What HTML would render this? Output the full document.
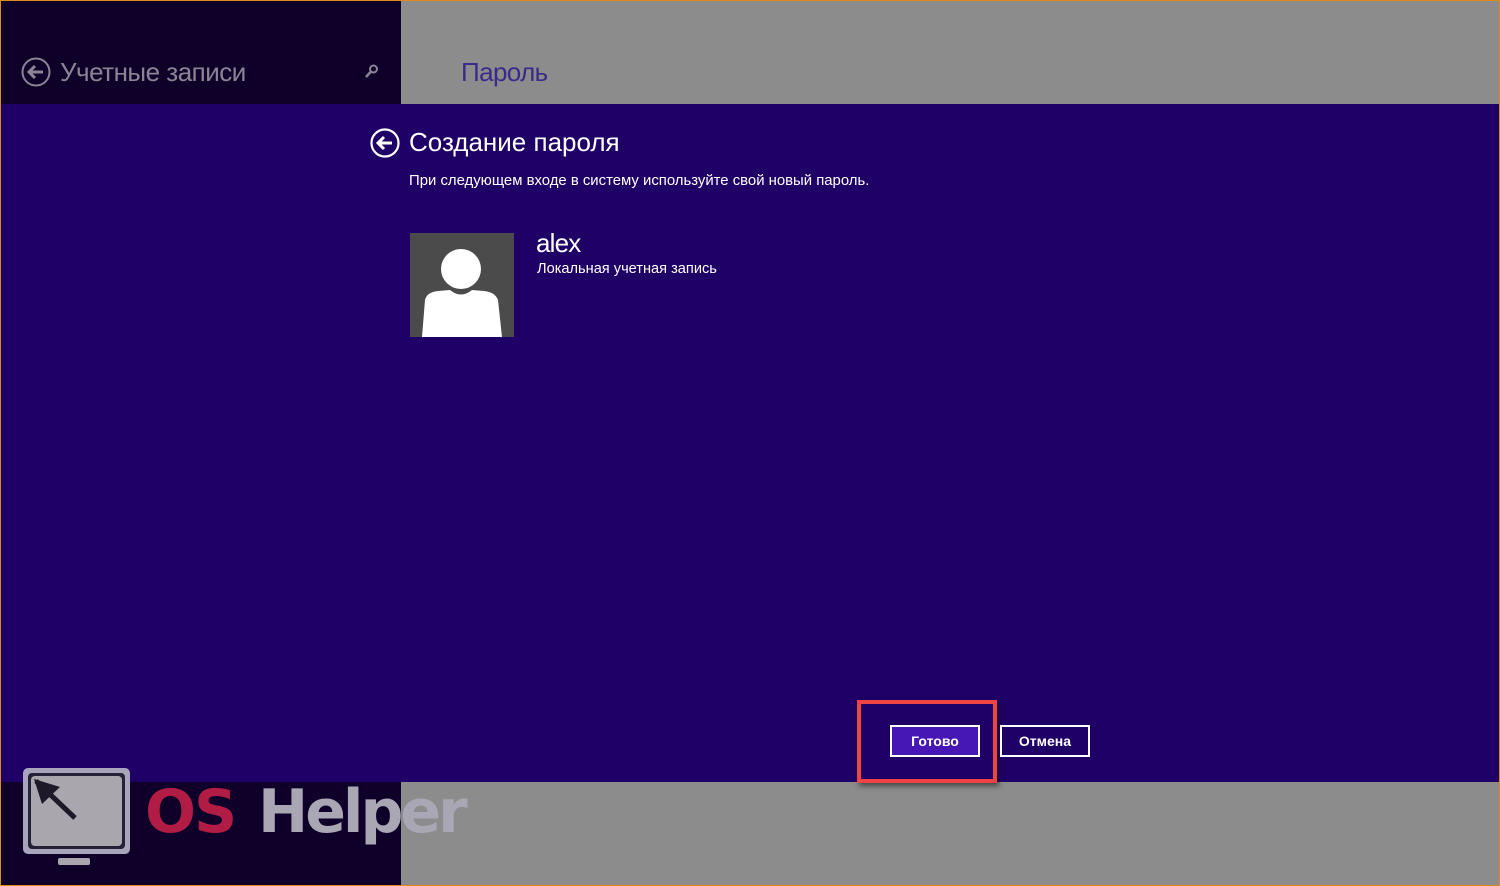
<!DOCTYPE html>
<html><head><meta charset="utf-8"><style>
*{margin:0;padding:0;box-sizing:border-box}
body{width:1500px;height:886px;position:relative;overflow:hidden;background:#1f0066;font-family:"Segoe UI","Liberation Sans",sans-serif;}
.abs{position:absolute}
</style></head><body>
<div class="abs" style="left:0;top:0;width:1500px;height:886px;border:1px solid #e08a1e;z-index:10;pointer-events:none"></div>
<div class="abs" style="left:0;top:0;width:401px;height:104px;background:#0e0029"></div>
<div class="abs" style="left:401px;top:0;width:1099px;height:104px;background:#8c8c8c"></div>
<div class="abs" style="left:0;top:782px;width:401px;height:104px;background:#0e0029"></div>
<div class="abs" style="left:401px;top:782px;width:1099px;height:104px;background:#8c8c8c"></div>

<svg class="abs" style="left:20px;top:56px" width="32" height="32" viewBox="0 0 32 32"><circle cx="16" cy="16" r="13.5" fill="none" stroke="#8a8494" stroke-width="2"/><path d="M23 16H10M15 10l-6 6 6 6" fill="none" stroke="#8a8494" stroke-width="3"/></svg>
<div class="abs" style="left:60px;top:57px;font-size:26px;color:#8a8494;letter-spacing:-0.5px">Учетные записи</div>
<svg class="abs" style="left:364px;top:63px" width="16" height="16" viewBox="0 0 16 16"><circle cx="9.5" cy="6" r="3.5" fill="none" stroke="#8a8494" stroke-width="2"/><path d="M7 8.5L2 14" stroke="#8a8494" stroke-width="2.5"/></svg>
<div class="abs" style="left:461px;top:57px;font-size:26px;color:#3c2a8a;letter-spacing:-0.6px">Пароль</div>

<svg class="abs" style="left:369px;top:127px" width="32" height="32" viewBox="0 0 32 32"><circle cx="16" cy="16" r="13.5" fill="none" stroke="#fff" stroke-width="2.2"/><path d="M23 16H10M15 10l-6 6 6 6" fill="none" stroke="#fff" stroke-width="3"/></svg>
<div class="abs" style="left:409px;top:127px;font-size:26px;color:#fff">Создание пароля</div>
<div class="abs" style="left:409px;top:173px;font-size:14.9px;color:#fff">При следующем входе в систему используйте свой новый пароль.</div>

<div class="abs" style="left:410px;top:233px;width:104px;height:104px;background:#4b4b4b;overflow:hidden">
<svg width="104" height="104" viewBox="0 0 104 104"><circle cx="51" cy="36" r="20" fill="#fff"/><path d="M12 104L15 67Q17 59 28 58L40 57Q51 66 62 57L74 58Q85 59 88 67L92 104Z" fill="#fff"/></svg></div>
<div class="abs" style="left:536px;top:228px;font-size:26px;color:#fff;letter-spacing:-0.8px">alex</div>
<div class="abs" style="left:537px;top:261px;font-size:14.6px;color:#fff">Локальная учетная запись</div>

<div class="abs" style="left:857px;top:700px;width:140px;height:83px;border:4px solid #f04444;box-shadow:2px 3px 5px rgba(0,0,0,.5)"></div>
<div class="abs" style="left:890px;top:725px;width:90px;height:32px;border:2px solid #fff;background:#4617b4;color:#fff;font-size:14px;font-weight:bold;text-align:center;line-height:29px">Готово</div>
<div class="abs" style="left:1000px;top:725px;width:90px;height:32px;border:2px solid #fff;color:#fff;font-size:14px;font-weight:bold;text-align:center;line-height:29px">Отмена</div>

<svg class="abs" style="left:20px;top:766px" width="114" height="100" viewBox="0 0 114 100"><rect x="3" y="2" width="107" height="86" rx="5" fill="#a8a4bc"/><rect x="8" y="7" width="97" height="76" rx="4" fill="#262038"/><rect x="11" y="10" width="91" height="70" rx="4" fill="#a9a6ad"/><rect x="38" y="92" width="32" height="7" rx="2" fill="#a9a6ad"/><path d="M16 15L55 52" stroke="#1c1a28" stroke-width="5"/><path d="M14 13L40 21L22 38Z" fill="#1c1a28"/></svg>
<div class="abs" style="left:145px;top:777px;font-size:60px;font-weight:bold;color:#b01c44;font-family:'DejaVu Sans',sans-serif;letter-spacing:-2px">OS</div>
<div class="abs" style="left:258px;top:777px;font-size:60px;font-weight:bold;color:#aaa7b4;font-family:'DejaVu Sans',sans-serif;letter-spacing:-3px">Helper</div>
</body></html>
